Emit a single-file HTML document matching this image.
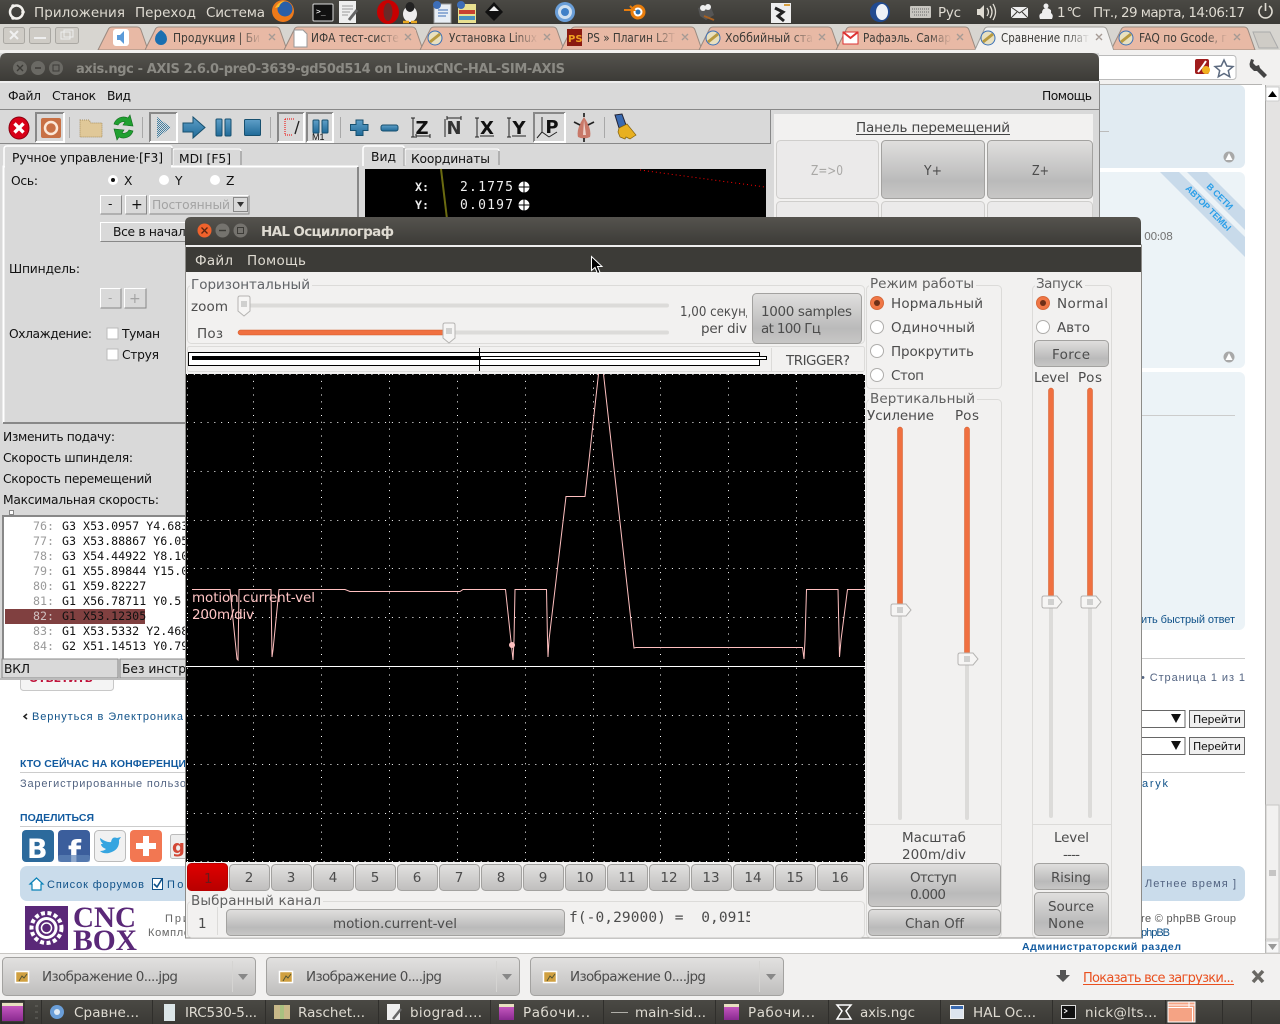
<!DOCTYPE html>
<html><head><meta charset="utf-8"><title>HAL Осциллограф</title>
<style>
html,body{margin:0;padding:0;background:#fff;width:1280px;height:1024px;overflow:hidden}
svg{display:block}
text{font-family:"DejaVu Sans","Liberation Sans",sans-serif;white-space:pre}
.p{font-size:13.5px;fill:#dfdbd2}
.t{font-size:12px;fill:#3c3b37}
.a{font-size:12.3px;fill:#111}
.h{font-size:13.5px;fill:#4c4c4c}
.l{font-family:"Liberation Sans",sans-serif;font-size:11px;fill:#105289}
.m{font-family:"DejaVu Sans Mono","Liberation Mono",monospace;font-size:11.67px}
.b{font-family:"Liberation Sans",sans-serif;font-weight:bold;font-size:10.5px;fill:#115a9f}
</style></head><body>
<svg width="1280" height="1024" viewBox="0 0 1280 1024" xmlns="http://www.w3.org/2000/svg">
<defs>
<linearGradient id="pn" x1="0" y1="0" x2="0" y2="1"><stop offset="0" stop-color="#4a4944"/><stop offset="1" stop-color="#3a3935"/></linearGradient>
<linearGradient id="tt" x1="0" y1="0" x2="0" y2="1"><stop offset="0" stop-color="#55534e"/><stop offset="1" stop-color="#3c3b37"/></linearGradient>
<linearGradient id="bt" x1="0" y1="0" x2="0" y2="1"><stop offset="0" stop-color="#e0dfde"/><stop offset=".7" stop-color="#bababa"/><stop offset="1" stop-color="#c8c7c6"/></linearGradient>
<linearGradient id="dl" x1="0" y1="0" x2="0" y2="1"><stop offset="0" stop-color="#e2e1e0"/><stop offset="1" stop-color="#bfbebd"/></linearGradient>
<linearGradient id="rd" x1="0" y1="0" x2="0" y2="1"><stop offset="0" stop-color="#e00000"/><stop offset="1" stop-color="#b80000"/></linearGradient>
<linearGradient id="fd" x1="0" y1="0" x2="1" y2="0"><stop offset="0" stop-color="#e8b9a5" stop-opacity="0"/><stop offset="1" stop-color="#e8b9a5"/></linearGradient>
<linearGradient id="fa" x1="0" y1="0" x2="1" y2="0"><stop offset="0" stop-color="#f2f1f0" stop-opacity="0"/><stop offset="1" stop-color="#f2f1f0"/></linearGradient>
<linearGradient id="bl" x1="0" y1="0" x2="0" y2="1"><stop offset="0" stop-color="#5f9fc8"/><stop offset="1" stop-color="#1f6a98"/></linearGradient>
<linearGradient id="pb" x1="0" y1="0" x2="0" y2="1"><stop offset="0" stop-color="#d060c8"/><stop offset="1" stop-color="#8a2a90"/></linearGradient>
<pattern id="hatch" width="2" height="2" patternUnits="userSpaceOnUse"><rect width="2" height="2" fill="#d9d9d9"/><rect width="1" height="1" fill="#3f7ea2"/><rect x="1" y="1" width="1" height="1" fill="#3f7ea2"/></pattern>
</defs>

<!-- WEB PAGE BEHIND -->
<rect width="1280" height="1024" fill="#fff"/>
<rect x="1050" y="85" width="195" height="83" rx="6" fill="#e1ebf2"/>
<rect x="1050" y="172" width="195" height="196" rx="6" fill="#ecf3f7"/>
<rect x="1050" y="372" width="195" height="258" rx="6" fill="#ecf3f7"/>
<rect x="1099" y="131" width="10" height="1" fill="#bbb"/>
<rect x="1141" y="415" width="94" height="1" fill="#ccc"/>
<polygon points="1160,172 1179,172 1245,237 1245,257" fill="#c8daea"/>
<polygon points="1187,172 1207,172 1245,210 1245,230" fill="#c8daea"/>
<text transform="translate(1206,187) rotate(45)" font-size="9" font-weight="bold" style="font-family:'Liberation Sans',sans-serif" fill="#2b9fe8" textLength="33">В СЕТИ</text>
<text transform="translate(1185,189) rotate(45)" font-size="9" font-weight="bold" style="font-family:'Liberation Sans',sans-serif" fill="#2b9fe8" textLength="60">АВТОР ТЕМЫ</text>
<text x="1144" y="240" font-size="11" fill="#777" textLength="29">00:08</text>
<g fill="#a8a8a8"><circle cx="1229" cy="157" r="5.5"/><circle cx="1229" cy="357" r="5.5"/></g>
<g fill="#fff"><polygon points="1229,153 1232.5,160 1225.5,160"/><polygon points="1229,353 1232.5,360 1225.5,360"/></g>
<text class="l" x="1141" y="623" textLength="94">ить быстрый ответ</text>
<rect x="20" y="658" width="1225" height="1" fill="#ccc"/>
<text class="l" x="1141" y="681" style="fill:#536482" textLength="104">• Страница 1 из 1</text>
<g><rect x="1100" y="710.5" width="85" height="17" fill="#fff" stroke="#666"/><rect x="1100" y="737.5" width="85" height="17" fill="#fff" stroke="#666"/>
<polygon points="1171,714 1181,714 1176,723" fill="#111"/><polygon points="1171,741 1181,741 1176,750" fill="#111"/>
<rect x="1189.5" y="710.5" width="55" height="17" fill="#efefef" stroke="#666"/><rect x="1189.5" y="737.5" width="55" height="17" fill="#efefef" stroke="#666"/>
<text x="1193" y="723" font-size="11" fill="#111" textLength="48">Перейти</text><text x="1193" y="750" font-size="11" fill="#111" textLength="48">Перейти</text></g>
<rect x="20" y="772" width="1225" height="1" fill="#ccc"/>
<text class="l" x="1142" y="787" textLength="26">aryk</text>
<rect x="20" y="866" width="1225" height="35" rx="7" fill="#cadceb"/>
<text class="l" x="1145" y="887" style="fill:#536482" textLength="91">Летнее время ]</text>
<text class="l" x="1141" y="922" style="fill:#555" textLength="95">re © phpBB Group</text>
<text class="l" x="1141" y="936" textLength="29">phpBB</text>
<text class="b" x="1022" y="950" textLength="159">Администраторский раздел</text>
<!-- left web -->
<rect x="20.5" y="672.5" width="93" height="18" rx="3" fill="#f4f4f4" stroke="#c8c8c8"/>
<text x="29" y="682" font-size="11" font-weight="bold" fill="#c0143c" textLength="64">ОТВЕТИТЬ</text>
<path d="M27 714l-3 2.500 3 2.500" fill="none" stroke="#222" stroke-width="1.500"/>
<text class="l" x="32" y="720" textLength="151">Вернуться в Электроника</text>
<text class="b" x="20" y="767" textLength="166">КТО СЕЙЧАС НА КОНФЕРЕНЦИ</text>
<text class="l" x="20" y="787" style="fill:#536482" textLength="166">Зарегистрированные пользо</text>
<text class="b" x="20" y="821" textLength="74">ПОДЕЛИТЬСЯ</text>
<rect x="20" y="826" width="166" height="1" fill="#ccc"/>
<rect x="22" y="830" width="32" height="32" rx="4" fill="#2c6a9c"/><text x="27" y="858" font-size="27" font-weight="bold" fill="#fff">B</text>
<rect x="58" y="830" width="32" height="32" rx="4" fill="#3b5e9c"/><text x="68" y="862" font-size="30" font-weight="bold" fill="#fff">f</text><rect x="58" y="855" width="32" height="7" rx="2" fill="#5f84b8" opacity=".7"/>
<rect x="94.500" y="830.500" width="31" height="31" rx="4" fill="#f1f1f1" stroke="#bbb"/><path d="M100 838q7 5 11 4q1-6 6-4l4-1-2 3q1 10-10 13q-6 1-9-2q4 0 6-2q-5-2-5-5l2 0q-3-3-3-6z" fill="#36a5e0"/>
<rect x="130" y="830" width="32" height="32" rx="4" fill="#f27752"/><path d="M143 836h6v7h7v6h-7v7h-6v-7h-7v-6h7z" fill="#fff"/>
<rect x="170.500" y="834.500" width="20" height="24" rx="2" fill="#eee" stroke="#bbb"/><text x="172" y="853" font-size="18" font-weight="bold" fill="#d34836">g</text>
<path d="M30 884l6.500-6 6.500 6h-2v6h-9v-6z" fill="#fff" stroke="#0a82b8" stroke-width="1.200"/>
<text class="l" x="47" y="888" textLength="97">Список форумов</text>
<rect x="152.500" y="878.500" width="10" height="11" fill="#fff" stroke="#105289"/><path d="M154 884l3 3 5-8" fill="none" stroke="#105289" stroke-width="1.600"/>
<text class="l" x="167" y="888" textLength="25">Под</text>
<rect x="25" y="906" width="43" height="44" fill="#5a2878"/>
<circle cx="46.500" cy="928" r="15" fill="none" stroke="#fff" stroke-width="4" stroke-dasharray="4 2.500"/><circle cx="46.500" cy="928" r="11" fill="#fff"/><circle cx="46.500" cy="928" r="8" fill="#5a2878"/><circle cx="46.500" cy="928" r="5" fill="none" stroke="#fff" stroke-width="1.500"/>
<text x="73" y="927" font-size="30" font-weight="bold" style="font-family:'Liberation Serif',serif" fill="#5a2878" textLength="63" lengthAdjust="spacingAndGlyphs">CNC</text>
<text x="73" y="950" font-size="30" font-weight="bold" style="font-family:'Liberation Serif',serif" fill="#5a2878" textLength="64" lengthAdjust="spacingAndGlyphs">BOX</text>
<text class="l" x="165" y="922" style="fill:#666" textLength="24">При</text>
<text class="l" x="148" y="936" style="fill:#666" textLength="42">Компле</text>

<!-- scrollbar -->
<rect x="1262" y="85" width="3" height="868" fill="#fff"/>
<rect x="1265" y="85" width="15" height="868" fill="#e4e3e2"/>
<rect x="1265" y="85" width="1" height="868" fill="#a8a7a5"/>
<rect x="1266" y="87" width="13" height="14" rx="1" fill="#fff" stroke="#ccc"/>
<polygon points="1272.500,91 1277,97 1268,97" fill="#000"/>
<rect x="1266" y="805" width="13" height="134" fill="#f2f1f0" stroke="#c8c7c5"/>
<path d="M1269 871h7M1269 873h7M1269 875h7" stroke="#999"/>
<rect x="1266" y="941" width="13" height="12" fill="#f7f7f7" stroke="#ccc"/>
<polygon points="1272.500,950 1277,944 1268,944" fill="#999"/>

<!-- CHROME TAB STRIP -->
<rect y="24" width="1280" height="30" fill="#d7d5d0"/>
<g fill="#cfccc6" stroke="#aaa8a3"><rect x="3.500" y="27.500" width="21" height="16" rx="2"/><rect x="29.500" y="27.500" width="21" height="16" rx="2"/><rect x="55.500" y="27.500" width="23" height="16" rx="2"/></g>
<path d="M10 31l8 8M18 31l-8 8" stroke="#f0f0f0" stroke-width="2"/>
<rect x="34" y="37" width="12" height="2" fill="#eee"/>
<rect x="61" y="32" width="9" height="7" fill="none" stroke="#eee"/><rect x="64" y="30" width="9" height="7" fill="none" stroke="#eee"/>
<g fill="#e8b9a5" stroke="#9a8a80">
<path d="M98 50L108 30Q109 27 112 27H137Q140 27 141 30L148 50z"/>
<path d="M145 50L155 30Q156 27 159 27H276Q279 27 280 30L287 50z"/>
<path d="M284 50L294 30Q295 27 298 27H412Q415 27 416 30L423 50z"/>
<path d="M420 50L430 30Q431 27 434 27H553Q556 27 557 30L564 50z"/>
<path d="M561 50L571 30Q572 27 575 27H691Q694 27 695 30L702 50z"/>
<path d="M699 50L709 30Q710 27 713 27H828Q831 27 832 30L839 50z"/>
<path d="M836 50L846 30Q847 27 850 27H965Q968 27 969 30L976 50z"/>
<path d="M1111 50L1121 30Q1122 27 1125 27H1244Q1247 27 1248 30L1255 50z"/>
</g>
<path d="M973 54L984 30Q985 27 988 27H1103Q1106 27 1107 30L1115 54z" fill="#f2f1f0" stroke="#a09e9a"/>
<path d="M1253 32L1270 32L1278 48L1259 48z" fill="#cfccc6" stroke="#aaa"/>
<text class="t" x="173" y="42" textLength="87" lengthAdjust="spacingAndGlyphs">Продукция | Би</text>
<text class="t" x="311" y="42" textLength="88" lengthAdjust="spacingAndGlyphs">ИФА тест-систе</text>
<text class="t" x="449" y="42" textLength="88" lengthAdjust="spacingAndGlyphs">Установка Linux</text>
<text class="t" x="587" y="42" textLength="88" lengthAdjust="spacingAndGlyphs">PS » Плагин L2T</text>
<text class="t" x="725" y="42" textLength="88" lengthAdjust="spacingAndGlyphs">Хоббийный ста</text>
<text class="t" x="863" y="42" textLength="88" lengthAdjust="spacingAndGlyphs">Рафаэль. Самар</text>
<text class="t" x="1001" y="42" textLength="88" lengthAdjust="spacingAndGlyphs">Сравнение плат</text>
<text class="t" x="1139" y="42" textLength="88" lengthAdjust="spacingAndGlyphs">FAQ по Gcode, г</text>
<g fill="url(#fd)">
<rect x="238" y="30" width="24" height="17"/><rect x="376" y="30" width="24" height="17"/><rect x="514" y="30" width="24" height="17"/><rect x="652" y="30" width="24" height="17"/><rect x="790" y="30" width="24" height="17"/><rect x="928" y="30" width="24" height="17"/><rect x="1204" y="30" width="24" height="17"/></g>
<g fill="#e8b9a5"><rect x="262" y="30" width="16" height="17"/><rect x="400" y="30" width="16" height="17"/><rect x="538" y="30" width="16" height="17"/><rect x="676" y="30" width="16" height="17"/><rect x="814" y="30" width="16" height="17"/><rect x="952" y="30" width="16" height="17"/><rect x="1228" y="30" width="16" height="17"/></g>
<rect x="1066" y="30" width="24" height="17" fill="url(#fa)"/><rect x="1090" y="30" width="16" height="17" fill="#f2f1f0"/>
<g stroke="#a59a94" stroke-width="1.400"><path d="M269 34l6 6M275 34l-6 6M405 34l6 6M411 34l-6 6M544 34l6 6M550 34l-6 6M682 34l6 6M688 34l-6 6M819 34l6 6M825 34l-6 6M957 34l6 6M963 34l-6 6M1096 34l6 6M1102 34l-6 6M1234 34l6 6M1240 34l-6 6"/></g>
<!-- favicons -->
<rect x="113" y="29" width="16" height="17" rx="3" fill="#fff"/><path d="M117 35h3l4-4v13l-4-4h-3z" fill="#5a9ad8"/>
<path d="M161 30q6 4 6 9a6 6 0 0 1-12 0q0-5 6-9z" fill="#1b6fb0"/>
<path d="M294 30h9l4 4v13h-13z" fill="#fff" stroke="#999"/>
<g fill="#e8e0c0" stroke="#3a70b8"><circle cx="435" cy="38" r="7"/><circle cx="713" cy="38" r="7"/><circle cx="988" cy="38" r="7"/><circle cx="1126" cy="38" r="7"/></g>
<path d="M430 42l10-8M708 42l10-8M983 42l10-8M1121 42l10-8" stroke="#b89a40" stroke-width="3"/>
<rect x="567" y="29" width="15" height="17" fill="#8a1a10"/><text x="568" y="42" font-size="10" font-weight="bold" fill="#f0a020">PS</text>
<rect x="843" y="32" width="15" height="12" fill="#fff" stroke="#d33"/><path d="M843 32l7.500 6 7.500-6" fill="none" stroke="#d33" stroke-width="2"/>

<!-- Chrome toolbar -->
<rect y="50" width="1280" height="35" fill="#f2f1f0"/><rect y="84" width="1262" height="1" fill="#b5b4b2"/>
<rect x="1050" y="55.500" width="186" height="24" rx="3" fill="#fff" stroke="#bbb"/>
<rect x="1195" y="59" width="14" height="15" rx="2" fill="#a01c1c"/><path d="M1198 72q5-6 8-11" stroke="#fff" stroke-width="2" fill="none"/><circle cx="1206" cy="70" r="4" fill="#f0b020"/>
<path d="M1224 60l2.800 6 6.200.6-4.700 4 1.400 6.200-5.700-3.300-5.700 3.300 1.400-6.200-4.700-4 6.200-.6z" fill="#fff" stroke="#5d6b80" stroke-width="1.500"/>
<path d="M1251 59l3 1-1 3 3 3 3-1 1 3 7 7-3 3-7-7-3 0-4-4-.5-3z" fill="#444"/>

<!-- TOP PANEL -->
<rect width="1280" height="24" fill="url(#pn)"/>
<circle cx="16.500" cy="12" r="6.500" fill="none" stroke="#f3f1ed" stroke-width="2.500"/>
<g fill="#f3f1ed"><circle cx="23" cy="12" r="1.800"/><circle cx="13" cy="6" r="1.800"/><circle cx="13" cy="18" r="1.800"/></g>
<text class="p" x="34" y="17" textLength="91">Приложения</text>
<text class="p" x="135" y="17" textLength="61">Переход</text>
<text class="p" x="206" y="17" textLength="59">Система</text>
<circle cx="283" cy="11" r="11" fill="#ee7a1a"/><circle cx="285" cy="9" r="7.500" fill="#2a5fa8"/><path d="M275 8q4-7 10-7q-5 2-6 6z" fill="#f8c030"/>
<rect x="313" y="4" width="20" height="17" rx="1" fill="#111" stroke="#ddd"/><text x="316" y="14" font-size="8" fill="#fff" style="font-family:'DejaVu Sans Mono',monospace">&gt;_</text>
<rect x="339" y="1" width="17" height="22" fill="#eee"/><path d="M342 6h11M342 9h11M342 12h8M342 15h6" stroke="#999"/><path d="M349 20l8-10" stroke="#666" stroke-width="3"/>
<ellipse cx="388" cy="12" rx="11" ry="12" fill="#c80000"/><ellipse cx="388" cy="12" rx="4.500" ry="9" fill="#6a2a28"/>
<ellipse cx="410" cy="14" rx="7" ry="8" fill="#eee"/><ellipse cx="410" cy="7" rx="4.500" ry="5" fill="#222"/><path d="M403 22h6M411 22h6" stroke="#e8a820" stroke-width="2.500"/>
<rect x="434" y="4" width="17" height="19" fill="#e8eef5" stroke="#999"/><circle cx="437" cy="5" r="4" fill="#3d6eb8"/><path d="M438 10h10M438 13h10M438 16h8" stroke="#3d6eb8"/>
<rect x="458" y="4" width="18" height="19" fill="#e8e090"/><circle cx="461" cy="5" r="4" fill="#3d6eb8"/><rect x="459" y="10" width="16" height="4" fill="#c84030"/><rect x="459" y="16" width="16" height="4" fill="#4a90c0"/>
<path d="M494 2l9 10-9 9-9-9z" fill="#111"/><path d="M494 6l5 5h-10z" fill="#eee"/>
<circle cx="565" cy="12" r="10" fill="#6a9ed8"/><circle cx="565" cy="12" r="7" fill="#d0e0f0"/><circle cx="565" cy="12" r="4" fill="#4080c8"/>
<circle cx="638" cy="12" r="6" fill="#fff" stroke="#e87d0d" stroke-width="3"/><path d="M624 10h10l-4-4" stroke="#e87d0d" stroke-width="2" fill="none"/><circle cx="638" cy="12" r="2.500" fill="#2a6fb0"/>
<path d="M698 8l12-3 4 10-8 5-6-4z" fill="#555"/><circle cx="703" cy="8" r="3" fill="#eee"/><circle cx="708" cy="7" r="3" fill="#eee"/><path d="M704 16l10 4" stroke="#a86020" stroke-width="2"/>
<rect x="771" y="3" width="20" height="20" fill="#eee"/><path d="M775 8l8 4-5 4 6 5" stroke="#222" stroke-width="3" fill="none"/><rect x="784" y="4" width="6" height="2" fill="#d8a040"/>
<circle cx="880" cy="12" r="10" fill="#214a90"/><ellipse cx="882" cy="12" rx="6" ry="8" fill="#eef2f8"/>
<rect x="910" y="6" width="21" height="12" rx="1" fill="#c8c6c0"/><path d="M912 9h17M912 12h17M914 15h13" stroke="#666" stroke-dasharray="1 1"/>
<text class="p" x="938" y="17" textLength="23">Рус</text>
<path d="M977 9h3l4-4v14l-4-4h-3z" fill="#dfdbd2"/><path d="M987 8q3 4 0 8M990 6q4 6 0 12M993 4q5 8 0 16" fill="none" stroke="#dfdbd2" stroke-width="1.300"/>
<rect x="1011" y="7" width="17" height="11" fill="#eee"/><path d="M1011 7l8.500 6 8.500-6M1011 18l6-6M1028 18l-6-6" stroke="#3c3b37" fill="none"/>
<path d="M1040 19q-2-5 2-6q0-5 5-5q5 1 4 5q3 2 1 6z" fill="#eee"/><circle cx="1046" cy="6" r="2.500" fill="#eee"/>
<text class="p" x="1057" y="17" textLength="24">1 °C</text>
<text class="p" x="1093" y="17" textLength="152">Пт., 29 марта, 14:06:17</text>
<path d="M1262 6a6.500 6.500 0 1 0 7 0" fill="none" stroke="#dfdbd2" stroke-width="1.600"/><path d="M1265.500 3v8" stroke="#dfdbd2" stroke-width="1.600"/>

<!-- AXIS WINDOW -->
<rect x="0" y="53" width="1099" height="626" fill="#d9d9d9"/>
<path d="M0 81V60Q0 53 7 53H1092Q1099 53 1099 60V81z" fill="url(#tt)"/>
<rect y="81" width="1099" height="2" fill="#eee"/>
<rect x="1099" y="81" width="1" height="590" fill="#888"/>
<g fill="#6a6964"><circle cx="20" cy="68" r="7"/><circle cx="38" cy="68" r="7"/><circle cx="56" cy="68" r="7"/></g>
<path d="M17 65l6 6M23 65l-6 6M35 68h6" stroke="#3c3b37" stroke-width="1.400"/><rect x="53" y="65" width="6" height="6" fill="none" stroke="#3c3b37"/>
<text x="76" y="73" font-size="13" font-weight="bold" fill="#8b8a84" textLength="489">axis.ngc - AXIS 2.6.0-pre0-3639-gd50d514 on LinuxCNC-HAL-SIM-AXIS</text>
<text class="a" x="8" y="100" textLength="33">Файл</text>
<text class="a" x="52" y="100" textLength="44">Станок</text>
<text class="a" x="107" y="100" textLength="24">Вид</text>
<text class="a" x="1042" y="100" textLength="50">Помощь</text>
<rect x="0" y="109" width="1099" height="1" fill="#888"/>
<rect x="0" y="143" width="770" height="1" fill="#888"/><rect x="770" y="110" width="1" height="34" fill="#888"/>
<!-- toolbar -->
<g fill="#a8a8a8"><rect x="69" y="117" width="1" height="21"/><rect x="142" y="117" width="1" height="21"/><rect x="270" y="117" width="1" height="21"/><rect x="340" y="117" width="1" height="21"/><rect x="604" y="117" width="1" height="21"/></g>
<path d="M36 142V113H64" stroke="#888" stroke-width="2" fill="none"/><path d="M64 113V142H36" stroke="#fff" stroke-width="2" fill="none"/>
<path d="M150 142V113H177" stroke="#888" stroke-width="2" fill="none"/><path d="M177 113V142H150" stroke="#fff" stroke-width="2" fill="none"/>
<path d="M278 142V113H304" stroke="#888" stroke-width="2" fill="none"/><path d="M304 113V142H278" stroke="#fff" stroke-width="2" fill="none"/>
<path d="M307 142V113H333" stroke="#888" stroke-width="2" fill="none"/><path d="M333 113V142H307" stroke="#fff" stroke-width="2" fill="none"/>
<path d="M534 142V113H565" stroke="#888" stroke-width="2" fill="none"/><path d="M565 113V142H534" stroke="#fff" stroke-width="2" fill="none"/>
<ellipse cx="19" cy="128" rx="10" ry="11" fill="#d80018" stroke="#8a0010"/><path d="M14.500 123.500l9 9M23.500 123.500l-9 9" stroke="#fff" stroke-width="3.400"/>
<rect x="41" y="118" width="20" height="20" rx="2" fill="#c87044"/><circle cx="51" cy="128" r="6" fill="none" stroke="#fbe8d8" stroke-width="2.500"/>
<path d="M80 120h9l2 3h11v14H80z" fill="#e0c898" stroke="#a89060" stroke-dasharray="1 1"/>
<path d="M114 124a10 10 0 0 1 14-6l2-3 3 11-10-1 2-3a6 6 0 0 0-7 3z" fill="#20a030" stroke="#0f6a1c" stroke-width=".6"/><path d="M133 131a10 10 0 0 1-14 6l-2 3-3-11 10 1-2 3a6 6 0 0 0 7-3z" fill="#20a030" stroke="#0f6a1c" stroke-width=".6"/>
<path d="M157 117v21l14-10.500z" fill="url(#hatch)"/>
<path d="M183 123h10v-6l12 10.500-12 10.500v-6h-10z" fill="url(#bl)" stroke="#17506f"/>
<rect x="216" y="119" width="6" height="17" rx="1" fill="url(#bl)" stroke="#17506f"/><rect x="225" y="119" width="6" height="17" rx="1" fill="url(#bl)" stroke="#17506f"/>
<rect x="244.500" y="119.500" width="16" height="16" rx="1" fill="url(#bl)" stroke="#17506f"/>
<path d="M285 119h9M285 119v16h7" stroke="#e00" stroke-dasharray="1 1" fill="none"/><path d="M295 134l4-13" stroke="#222" stroke-width="1.300"/>
<rect x="313" y="120" width="6" height="13" rx="1" fill="url(#bl)" stroke="#17506f"/><rect x="322" y="120" width="6" height="13" rx="1" fill="url(#bl)" stroke="#17506f"/>
<text x="312" y="140" font-size="9" fill="#111" style="font-family:'Liberation Sans',sans-serif">M1</text>
<path d="M356 120h7v4.500h5v6h-5v5h-7v-5h-5.500v-6h5.500z" fill="url(#bl)" stroke="#17506f"/>
<rect x="381" y="125" width="17" height="6" rx="2" fill="url(#bl)" stroke="#17506f"/>
<g font-size="18" font-weight="bold" fill="#111" style="font-family:'Liberation Serif',serif" text-anchor="middle">
<text x="422" y="134">Z</text><text x="454" y="134" fill="#333">N</text><text x="487" y="134">X</text><text x="519" y="134">Y</text><text x="552" y="133">P</text></g>
<path d="M413 118v19M411 118h4M411 137h4M416 136h14M416 134v4M430 134v4M445 119v18M447 118h14M447 116v4M461 116v4M477 118v19M475 118h4M475 137h4M480 136h14M509 118v19M507 118h4M507 137h4M512 136h14" stroke="#222" fill="none"/>
<path d="M542 117v15M542 132l-5 6M542 132l7 5M549 137l8-5" stroke="#222" fill="none"/>
<path d="M584 117q8 12 6 20q-6 3-12 0q-2-8 6-20z" fill="#c87868"/><path d="M574 122l6 3M594 122l-6 3M584 113v4M584 138v4" stroke="#222" stroke-width="1.700"/><path d="M584 120l2 15h-3z" fill="#ecd0c8"/>
<path d="M615 115l7-1 4 11-7 3z" fill="#3a6ab0" stroke="#223"/><path d="M619 128l8-4 9 11-6 4-4-2-1 2-5-2-2-5z" fill="#e8b020" stroke="#806010" stroke-width=".7"/>
<!-- left notebook -->
<path d="M3.500 423V166.500H358" fill="none" stroke="#fff" stroke-width="2"/>
<path d="M358 167V423H3" fill="none" stroke="#888" stroke-width="2"/>
<path d="M4 166V149Q4 146 7 146H170Q172 146 172 148V166" fill="#d9d9d9" stroke="#fff" stroke-width="1.500"/><path d="M172 148V165" stroke="#888"/>
<rect x="5" y="160" width="166" height="8" fill="#d9d9d9"/>
<path d="M173 165V151Q173 149 175 149H239Q241 149 241 151V165" fill="#d9d9d9" stroke="#fff"/><path d="M241 151V165" stroke="#888"/>
<text class="a" x="12" y="162" textLength="151">Ручное управление·[F3]</text>
<text class="a" x="179" y="163" textLength="52">MDI [F5]</text>
<path d="M363 166V149Q363 146 366 146H402Q404 146 404 148V166" fill="#d9d9d9" stroke="#fff" stroke-width="1.500"/><path d="M404 148V166" stroke="#888"/>
<path d="M405 165V151Q405 149 407 149H497Q499 149 499 151V165" fill="#d9d9d9" stroke="#fff"/><path d="M499 151V165" stroke="#888"/>
<text class="a" x="371" y="161" textLength="25">Вид</text>
<text class="a" x="411" y="163" textLength="79">Координаты</text>
<text class="a" x="11" y="185" textLength="27">Ось:</text>
<g fill="#fff"><circle cx="113" cy="180" r="5"/><circle cx="164" cy="180" r="5"/><circle cx="215" cy="180" r="5"/></g><circle cx="113" cy="180" r="2" fill="#111"/>
<text class="a" x="124" y="185">X</text><text class="a" x="175" y="185">Y</text><text class="a" x="226" y="185">Z</text>
<g fill="#d9d9d9" stroke="#888"><path d="M100.500 214V195.500H121.500" stroke="#fff"/><path d="M121.500 195.500V214H100.500" fill="none"/><path d="M125.500 214V195.500H146.500" stroke="#fff"/><path d="M146.500 195.500V214H125.500" fill="none"/></g>
<text class="a" x="108" y="208">-</text><text class="a" x="131" y="209" style="font-size:14px">+</text>
<rect x="149" y="195" width="100" height="19" fill="#d9d9d9"/><path d="M149.500 214V195.500H249" stroke="#fff" fill="none"/><path d="M249 195.500V214H149.500" stroke="#888" fill="none"/>
<text x="152" y="209" font-size="12.300" fill="#a3a3a3" textLength="78">Постоянный</text>
<rect x="233.500" y="197.500" width="14" height="14" fill="#d9d9d9" stroke="#888"/><polygon points="237,202 244,202 240.500,207" fill="#333"/>
<rect x="100.500" y="222.500" width="100" height="19" fill="#d9d9d9"/><path d="M100.500 241V222.500H200" stroke="#fff" fill="none"/><path d="M100.500 241.500H200" stroke="#888"/>
<text class="a" x="113" y="236" textLength="80">Все в начало</text>
<text class="a" x="9" y="273" textLength="71">Шпиндель:</text>
<g fill="none"><path d="M100.500 308V288.500H121" stroke="#fff"/><path d="M121 288.500V308H100.500" stroke="#888"/><path d="M124.500 308V288.500H146" stroke="#fff"/><path d="M146 288.500V308H124.500" stroke="#888"/></g>
<text x="108" y="302" font-size="12" fill="#a3a3a3">-</text><text x="129" y="303" font-size="14" fill="#a3a3a3">+</text>
<text class="a" x="9" y="338" textLength="83">Охлаждение:</text>
<rect x="107" y="328" width="11" height="11" fill="#fff" stroke="#bbb"/><rect x="107" y="349" width="11" height="11" fill="#fff" stroke="#bbb"/>
<text class="a" x="122" y="338" textLength="38">Туман</text>
<text class="a" x="122" y="359" textLength="37">Струя</text>
<text class="a" x="3" y="441" textLength="112">Изменить подачу:</text>
<text class="a" x="3" y="462" textLength="130">Скорость шпинделя:</text>
<text class="a" x="3" y="483" textLength="149">Скорость перемещений</text>
<text class="a" x="3" y="504" textLength="156">Максимальная скорость:</text>
<rect x="9.500" y="510.500" width="4" height="4" fill="#fff" stroke="#888"/>
<rect x="2" y="516" width="190" height="143" fill="#fff"/><path d="M3 659V516H190" fill="none" stroke="#888" stroke-width="2"/>
<rect x="5" y="609" width="140" height="15" fill="#804040"/>
<text class="m" x="33" y="530" fill="#999">76:</text><text class="m" x="62" y="530" fill="#111">G3 X53.0957 Y4.683</text>
<text class="m" x="33" y="545" fill="#999">77:</text><text class="m" x="62" y="545" fill="#111">G3 X53.88867 Y6.05</text>
<text class="m" x="33" y="560" fill="#999">78:</text><text class="m" x="62" y="560" fill="#111">G3 X54.44922 Y8.10</text>
<text class="m" x="33" y="575" fill="#999">79:</text><text class="m" x="62" y="575" fill="#111">G1 X55.89844 Y15.0</text>
<text class="m" x="33" y="590" fill="#999">80:</text><text class="m" x="62" y="590" fill="#111">G1 X59.82227</text>
<text class="m" x="33" y="605" fill="#999">81:</text><text class="m" x="62" y="605" fill="#111">G1 X56.78711 Y0.5</text>
<text class="m" x="33" y="620" fill="#d0c0c0">82:</text><text class="m" x="62" y="620" fill="#111">G1 X53.12305</text>
<text class="m" x="33" y="635" fill="#999">83:</text><text class="m" x="62" y="635" fill="#111">G1 X53.5332 Y2.468</text>
<text class="m" x="33" y="650" fill="#999">84:</text><text class="m" x="62" y="650" fill="#111">G2 X51.14513 Y0.79</text>
<rect x="2" y="659" width="116" height="19" fill="#d9d9d9" stroke="#888"/><rect x="120" y="659" width="70" height="19" fill="#d9d9d9" stroke="#888"/>
<text class="a" x="4" y="673" textLength="26">ВКЛ</text>
<text class="a" x="122" y="673" textLength="64">Без инстр</text>
<rect x="0" y="678" width="186" height="2" fill="#bbb"/>
<!-- preview -->
<rect x="365" y="169" width="401" height="50" fill="#000"/>
<path d="M441 169l6 50" stroke="#6a6a10" stroke-width="2"/>
<path d="M640 170L765 187" stroke="#f00" stroke-dasharray="1 3"/>
<text class="m" x="415" y="191" fill="#eee" font-weight="bold">X:</text><text class="m" x="415" y="209" fill="#eee" font-weight="bold">Y:</text>
<text class="m" x="460" y="191" fill="#eee" style="font-size:13px" textLength="53">2.1775</text><text class="m" x="460" y="209" fill="#eee" style="font-size:13px" textLength="53">0.0197</text>
<g fill="#fff"><circle cx="524" cy="187" r="5.500"/><circle cx="524" cy="205" r="5.500"/></g><path d="M524 181v12M518 187h12M524 199v12M518 205h12" stroke="#000"/>
<!-- jog panel -->
<rect x="774" y="114" width="319" height="105" fill="#f2f1f0"/>
<text class="h" x="856" y="132" textLength="154" style="fill:#444">Панель перемещений</text>
<rect x="856" y="134" width="154" height="1" fill="#444"/>
<g stroke="#cfcecc" fill="#ebeaea"><rect x="776.500" y="140.500" width="102" height="58" rx="4"/><rect x="776.500" y="201.500" width="102" height="30" rx="4"/><rect x="881.500" y="201.500" width="103" height="30" rx="4"/><rect x="987.500" y="201.500" width="105" height="30" rx="4"/></g>
<rect x="881.500" y="140.500" width="103" height="58" rx="4" fill="url(#bt)" stroke="#a3a2a0"/>
<rect x="987.500" y="140.500" width="105" height="58" rx="4" fill="url(#bt)" stroke="#a3a2a0"/>
<text class="h" x="811" y="175" textLength="32" lengthAdjust="spacingAndGlyphs" style="fill:#a9a8a6">Z=&gt;0</text>
<text class="h" x="924" y="175" textLength="18" lengthAdjust="spacingAndGlyphs">Y+</text>
<text class="h" x="1032" y="175" textLength="17" lengthAdjust="spacingAndGlyphs">Z+</text>

<!-- HAL WINDOW -->
<rect x="185.500" y="245" width="956" height="693" fill="#f2f1f0" stroke="#8c8b88"/>
<path d="M185 245V223Q185 217 191 217H1135Q1141 217 1141 223V245z" fill="url(#tt)"/>
<rect x="186" y="245" width="955" height="2" fill="#eee"/>
<rect x="186" y="247" width="955" height="25" fill="#3c3b37"/>
<circle cx="204.500" cy="230.500" r="7" fill="#f0622c"/><path d="M201.500 227.500l6 6M207.500 227.500l-6 6" stroke="#5a2410" stroke-width="1.300"/>
<circle cx="222.500" cy="230.500" r="7" fill="#75736e"/><path d="M219 230.500h7" stroke="#3c3b37" stroke-width="1.400"/>
<circle cx="240.500" cy="230.500" r="7" fill="#75736e"/><rect x="237.500" y="227.500" width="6" height="6" fill="none" stroke="#3c3b37"/>
<text x="261" y="236" font-size="13.500" font-weight="bold" fill="#dfdbd2" textLength="133">HAL Осциллограф</text>
<text class="p" x="195" y="265" textLength="38">Файл</text>
<text class="p" x="247" y="265" textLength="59">Помощь</text>
<!-- frames -->
<g fill="none" stroke="#dcdbd9"><rect x="187.500" y="285.500" width="677" height="58" rx="4"/><rect x="187.500" y="346.500" width="677" height="25" rx="2"/><rect x="866.500" y="285.500" width="135" height="103" rx="4"/><rect x="866.500" y="399.500" width="135" height="538" rx="4"/><rect x="1032.500" y="285.500" width="79" height="652" rx="4"/><rect x="187.500" y="901.500" width="677" height="36" rx="4"/></g>
<g fill="#f2f1f0"><rect x="190" y="280" width="122" height="8"/><rect x="869" y="280" width="107" height="8"/><rect x="869" y="394" width="108" height="8"/><rect x="1035" y="280" width="50" height="8"/><rect x="190" y="896" width="133" height="8"/></g>
<text class="h" x="191" y="289" textLength="119" style="fill:#5f6266">Горизонтальный</text>
<text class="h" x="870" y="288" textLength="104" style="fill:#5f5f5f">Режим работы</text>
<text class="h" x="870" y="403" textLength="105" style="fill:#5f5f5f">Вертикальный</text>
<text class="h" x="1036" y="288" textLength="47" style="fill:#5f5f5f">Запуск</text>
<text class="h" x="191" y="905" textLength="130" style="fill:#5f5f5f">Выбранный канал</text>
<text class="h" x="191" y="311" textLength="37">zoom</text>
<text class="h" x="197" y="338" textLength="26">Поз</text>
<rect x="238" y="303.500" width="431" height="4" rx="2" fill="#dcdbd9"/>
<rect x="238" y="330.500" width="431" height="4" rx="2" fill="#dcdbd9"/>
<rect x="238" y="330" width="212" height="5" rx="2.500" fill="#f07040" stroke="#d05a28" stroke-width=".5"/>
<path d="M238 298q0-2 2-2h8q2 0 2 2v13l-6 5-6-5z" fill="#f6f5f4" stroke="#b5b4b2"/><path d="M241 302h6M241 304h6M241 306h6" stroke="#aaa"/>
<path d="M443 325q0-2 2-2h8q2 0 2 2v13l-6 5-6-5z" fill="#f6f5f4" stroke="#b5b4b2"/><path d="M446 329h6M446 331h6M446 333h6" stroke="#aaa"/>
<text class="h" x="680" y="316" textLength="74" lengthAdjust="spacingAndGlyphs">1,00 секунд</text><rect x="747" y="302" width="5" height="18" fill="#f2f1f0"/>
<text class="h" x="701" y="333" textLength="46">per div</text>
<rect x="752.500" y="293.500" width="109" height="50" rx="4" fill="url(#bt)" stroke="#a3a2a0"/>
<text class="h" x="761" y="316" textLength="91">1000 samples</text>
<text class="h" x="761" y="333" textLength="60">at 100 Гц</text>
<rect x="188.500" y="352.500" width="571" height="13" fill="#fff" stroke="#000"/>
<rect x="192" y="356" width="288" height="4" fill="#000"/>
<rect x="480.500" y="356.500" width="286" height="3" fill="#fff" stroke="#000"/>
<rect x="479" y="348" width="1" height="23" fill="#000"/>
<rect x="771" y="348" width="1" height="23" fill="#dcdbd9"/>
<text class="h" x="786" y="365" textLength="64">TRIGGER?</text>
<!-- scope -->
<rect x="186" y="374" width="679" height="488" fill="#000"/>
<path d="M187.500 374V862M253.500 374V862M321.500 374V862M389.500 374V862M457.500 374V862M525.500 374V862M593.500 374V862M660.500 374V862M728.500 374V862M796.500 374V862M864.500 374V862" stroke="#fff" stroke-dasharray="1 5.830" fill="none"/>
<path d="M187 374.500H865M187 422.500H865M187 471.500H865M187 520.500H865M187 568.500H865M187 617.500H865M187 715.500H865M187 764.500H865M187 813.500H865M187 861.500H865" stroke="#fff" stroke-dasharray="1 5.830" fill="none"/>
<rect x="186" y="666" width="679" height="1" fill="#fff"/>
<path d="M192 589.500H230L237 659L238 660L239 589.500H271L272 657L273 650L279 589.500H345L350 591.500H460L463 589.500H505.500L513 660L514 640L515 589.500H546.500L547.500 640L548 657L549 640L566 496.500H585L598.500 374M603.500 374L634 648L636 647.500H802.500L804 659L805 640L806.500 589.500H838L839.500 657L841 640L847.500 589.500H865" fill="none" stroke="#ffc0c0"/>
<circle cx="512" cy="645" r="3" fill="#ffc0c0"/>
<text class="h" x="192" y="602" textLength="123" style="fill:#ffc4c4">motion.current-vel</text>
<text class="h" x="192" y="619" textLength="62" style="fill:#ffc4c4">200m/div</text>
<!-- channels -->
<rect x="187.500" y="863.500" width="40" height="27" rx="4" fill="url(#rd)" stroke="#b00"/>
<text class="h" x="204" y="883" style="fill:#6a1a1a">1</text>
<g fill="url(#dl)" stroke="#a3a2a0">
<rect x="229.500" y="864.500" width="40" height="26" rx="4"/><rect x="271.500" y="864.500" width="40" height="26" rx="4"/><rect x="313.500" y="864.500" width="40" height="26" rx="4"/><rect x="355.500" y="864.500" width="40" height="26" rx="4"/><rect x="397.500" y="864.500" width="40" height="26" rx="4"/><rect x="439.500" y="864.500" width="40" height="26" rx="4"/><rect x="481.500" y="864.500" width="40" height="26" rx="4"/><rect x="523.500" y="864.500" width="40" height="26" rx="4"/><rect x="565.500" y="864.500" width="40" height="26" rx="4"/><rect x="607.500" y="864.500" width="40" height="26" rx="4"/><rect x="649.500" y="864.500" width="40" height="26" rx="4"/><rect x="691.500" y="864.500" width="40" height="26" rx="4"/><rect x="733.500" y="864.500" width="40" height="26" rx="4"/><rect x="775.500" y="864.500" width="40" height="26" rx="4"/><rect x="817.500" y="864.500" width="46" height="26" rx="4"/></g>
<g text-anchor="middle"><text class="h" x="249" y="882">2</text><text class="h" x="291" y="882">3</text><text class="h" x="333" y="882">4</text><text class="h" x="375" y="882">5</text><text class="h" x="417" y="882">6</text><text class="h" x="459" y="882">7</text><text class="h" x="501" y="882">8</text><text class="h" x="543" y="882">9</text><text class="h" x="585" y="882">10</text><text class="h" x="627" y="882">11</text><text class="h" x="669" y="882">12</text><text class="h" x="711" y="882">13</text><text class="h" x="753" y="882">14</text><text class="h" x="795" y="882">15</text><text class="h" x="840" y="882">16</text></g>
<text class="h" x="198" y="928">1</text><rect x="217" y="907" width="1" height="28" fill="#dcdbd9"/>
<rect x="226.500" y="909.500" width="338" height="26" rx="4" fill="url(#bt)" stroke="#a3a2a0"/>
<text class="h" x="333" y="928" textLength="124">motion.current-vel</text>
<text class="m" x="569" y="922" fill="#4c4c4c" style="font-size:14.500px" textLength="185">f(-0,29000) =  0,0915</text><rect x="750" y="908" width="20" height="18" fill="#f2f1f0"/>
<!-- mode radios -->
<g fill="#fff" stroke="#aeadab"><circle cx="877" cy="327" r="6.500"/><circle cx="877" cy="351" r="6.500"/><circle cx="877" cy="375" r="6.500"/><circle cx="1043" cy="327" r="6.500"/></g>
<circle cx="877" cy="303" r="6.500" fill="#f07746" stroke="#d8693a"/><circle cx="877" cy="303" r="3" fill="#6e3018"/>
<circle cx="1043" cy="303" r="6.500" fill="#f07746" stroke="#d8693a"/><circle cx="1043" cy="303" r="3" fill="#6e3018"/>
<text class="h" x="891" y="308" textLength="92">Нормальный</text>
<text class="h" x="891" y="332" textLength="84">Одиночный</text>
<text class="h" x="891" y="356" textLength="83">Прокрутить</text>
<text class="h" x="891" y="380" textLength="33">Стоп</text>
<text class="h" x="1057" y="308" textLength="51">Normal</text>
<text class="h" x="1057" y="332" textLength="33">Авто</text>
<rect x="1034.500" y="340.500" width="74" height="26" rx="4" fill="url(#bt)" stroke="#a3a2a0"/>
<text class="h" x="1052" y="359" textLength="38">Force</text>
<text class="h" x="1034" y="382" textLength="35">Level</text>
<text class="h" x="1078" y="382" textLength="24">Pos</text>
<text class="h" x="867" y="420" textLength="67">Усиление</text>
<text class="h" x="955" y="420" textLength="24">Pos</text>
<!-- vertical sliders -->
<g fill="#dcdbd9"><rect x="898" y="427" width="4" height="393" rx="2"/><rect x="965" y="427" width="4" height="393" rx="2"/><rect x="1049" y="388" width="4" height="430" rx="2"/><rect x="1088" y="388" width="4" height="430" rx="2"/></g>
<g fill="#f07040" stroke="#d05a28" stroke-width=".5"><rect x="897.500" y="427" width="5" height="184" rx="2.500"/><rect x="964.500" y="427" width="5" height="233" rx="2.500"/><rect x="1048.500" y="388" width="5" height="215" rx="2.500"/><rect x="1087.500" y="388" width="5" height="215" rx="2.500"/></g>
<g fill="#f6f5f4" stroke="#b5b4b2">
<path d="M893 604h13l5 6-5 6h-13q-2 0-2-2v-8q0-2 2-2z"/><path d="M960 653h13l5 6-5 6h-13q-2 0-2-2v-8q0-2 2-2z"/><path d="M1044 596h13l5 6-5 6h-13q-2 0-2-2v-8q0-2 2-2z"/><path d="M1083 596h13l5 6-5 6h-13q-2 0-2-2v-8q0-2 2-2z"/></g>
<path d="M898 607v6M900 607v6M902 607v6M965 656v6M967 656v6M969 656v6M1049 599v6M1051 599v6M1053 599v6M1088 599v6M1090 599v6M1092 599v6" stroke="#aaa"/>
<rect x="867" y="824" width="134" height="1" fill="#dcdbd9"/><rect x="1033" y="824" width="78" height="1" fill="#dcdbd9"/>
<text class="h" x="902" y="842" textLength="64">Масштаб</text>
<text class="h" x="902" y="859" textLength="64">200m/div</text>
<text class="h" x="1054" y="842" textLength="35">Level</text>
<text class="h" x="1063" y="859" textLength="17">----</text>
<rect x="868.500" y="863.500" width="132" height="43" rx="4" fill="url(#bt)" stroke="#a3a2a0"/>
<text class="h" x="910" y="882" textLength="47">Отступ</text>
<text class="h" x="910" y="899" textLength="36">0.000</text>
<rect x="868.500" y="909.500" width="132" height="26" rx="4" fill="url(#bt)" stroke="#a3a2a0"/>
<text class="h" x="905" y="928" textLength="59">Chan Off</text>
<rect x="1034.500" y="863.500" width="74" height="26" rx="4" fill="url(#bt)" stroke="#a3a2a0"/>
<text class="h" x="1051" y="882" textLength="40">Rising</text>
<rect x="1034.500" y="892.500" width="74" height="43" rx="4" fill="url(#bt)" stroke="#a3a2a0"/>
<text class="h" x="1048" y="911" textLength="46">Source</text>
<text class="h" x="1048" y="928" textLength="36">None</text>
<!-- cursor -->
<path d="M591.500 256.500v14l3.500-3 2.500 6 2.500-1-2.500-6h4.500z" fill="#000" stroke="#fff"/>

<!-- DOWNLOAD BAR -->
<rect y="953" width="1280" height="47" fill="#f2f1f0"/><rect y="953" width="1280" height="1" fill="#c8c6c3"/>
<g fill="url(#dl)" stroke="#a3a2a0"><rect x="2.500" y="957.500" width="253" height="38" rx="4"/><rect x="266.500" y="957.500" width="253" height="38" rx="4"/><rect x="530.500" y="957.500" width="253" height="38" rx="4"/></g>
<g fill="#d5d4d2"><rect x="232" y="961" width="1" height="31"/><rect x="496" y="961" width="1" height="31"/><rect x="759" y="961" width="1" height="31"/></g>
<g fill="#888"><polygon points="238,974 248,974 243,980"/><polygon points="502,974 512,974 507,980"/><polygon points="766,974 776,974 771,980"/></g>
<g><rect x="15.500" y="971.500" width="13" height="11" fill="#d0a040" stroke="#fff" stroke-width="1.500"/><rect x="279.500" y="971.500" width="13" height="11" fill="#d0a040" stroke="#fff" stroke-width="1.500"/><rect x="543.500" y="971.500" width="13" height="11" fill="#d0a040" stroke="#fff" stroke-width="1.500"/>
<path d="M19 981l3-5 2 2 3-4M283 981l3-5 2 2 3-4M547 981l3-5 2 2 3-4" stroke="#553" fill="none"/></g>
<text class="h" x="42" y="981" textLength="136">Изображение 0....jpg</text><text class="h" x="306" y="981" textLength="136">Изображение 0....jpg</text><text class="h" x="570" y="981" textLength="136">Изображение 0....jpg</text>
<path d="M1060 970h6v5h4l-7 7-7-7h4z" fill="#555"/>
<text x="1083" y="982" font-size="13" fill="#e9501f" textLength="151">Показать все загрузки...</text><rect x="1083" y="984" width="151" height="1" fill="#e9501f"/>
<path d="M1253 971l10 11M1263 971l-10 11" stroke="#6a6864" stroke-width="3.500"/>

<!-- BOTTOM PANEL -->
<rect y="1000" width="1280" height="24" fill="url(#pn)"/>
<rect x="1" y="1001" width="23" height="22" fill="none" stroke="#222"/><rect x="2" y="1003" width="21" height="18" fill="url(#pb)"/><rect x="2" y="1003" width="21" height="3" fill="#e8e0c0"/>
<path d="M35 1006h3M35 1012h3M35 1018h3" stroke="#6a6964"/>
<g fill="#2f2e2b"><rect x="41" y="1000" width="1" height="24"/><rect x="152" y="1000" width="1" height="24"/><rect x="265" y="1000" width="1" height="24"/><rect x="378" y="1000" width="1" height="24"/><rect x="490" y="1000" width="1" height="24"/><rect x="603" y="1000" width="1" height="24"/><rect x="715" y="1000" width="1" height="24"/><rect x="828" y="1000" width="1" height="24"/><rect x="940" y="1000" width="1" height="24"/><rect x="1052" y="1000" width="1" height="24"/><rect x="1165" y="1000" width="1" height="24"/><rect x="1222" y="1000" width="1" height="24"/><rect x="1251" y="1000" width="1" height="24"/></g>
<circle cx="57" cy="1012" r="7" fill="#6a9ed8"/><circle cx="57" cy="1012" r="3" fill="#dfeaf5"/>
<rect x="164" y="1004" width="11" height="17" fill="#dce6e8"/>
<rect x="274" y="1005" width="16" height="14" fill="#c8b888"/><rect x="280" y="1005" width="4" height="14" fill="#a8c080"/>
<rect x="387" y="1004" width="13" height="16" fill="#eee"/><path d="M393 1019l8-10" stroke="#666" stroke-width="2.500"/>
<rect x="499" y="1004" width="15" height="16" fill="url(#pb)"/><rect x="499" y="1004" width="15" height="3" fill="#e8e0c0"/><rect x="724" y="1004" width="15" height="16" fill="url(#pb)"/><rect x="724" y="1004" width="15" height="3" fill="#e8e0c0"/>
<rect x="611" y="1012" width="17" height="1" fill="#b0aea8"/>
<path d="M837 1005h14l-5 6 5 8h-14l5-8zM838 1019h12" fill="none" stroke="#fff" stroke-width="1.500"/>
<rect x="950.500" y="1005.500" width="13" height="13" fill="#dde4ee" stroke="#eee"/><rect x="951" y="1006" width="12" height="3" fill="#3a6ab0"/>
<rect x="1061.500" y="1005.500" width="14" height="13" fill="#111" stroke="#ddd"/><path d="M1064 1009l3 2-3 2" stroke="#fff" fill="none"/>
<text class="p" x="74" y="1017" textLength="65">Сравне...</text>
<text class="p" x="185" y="1017" textLength="72">IRC530-5...</text>
<text class="p" x="298" y="1017" textLength="67">Raschet...</text>
<text class="p" x="410" y="1017" textLength="72">biograd....</text>
<text class="p" x="523" y="1017" textLength="67">Рабочи...</text>
<text class="p" x="635" y="1017" textLength="71">main-sid...</text>
<text class="p" x="748" y="1017" textLength="67">Рабочи...</text>
<text class="p" x="860" y="1017" textLength="55">axis.ngc</text>
<text class="p" x="973" y="1017" textLength="63">HAL Ос...</text>
<text class="p" x="1085" y="1017" textLength="72">nick@lts...</text>
<rect x="1168" y="1002" width="27" height="20" fill="#f5a384" stroke="#fff"/><rect x="1168" y="1002" width="27" height="3" fill="none" stroke="#fff"/><path d="M1168.500 1007.500H1192.500V1022" fill="none" stroke="#fff"/><path d="M1189 1002v5" stroke="#fff"/>
</svg>
</body></html>
